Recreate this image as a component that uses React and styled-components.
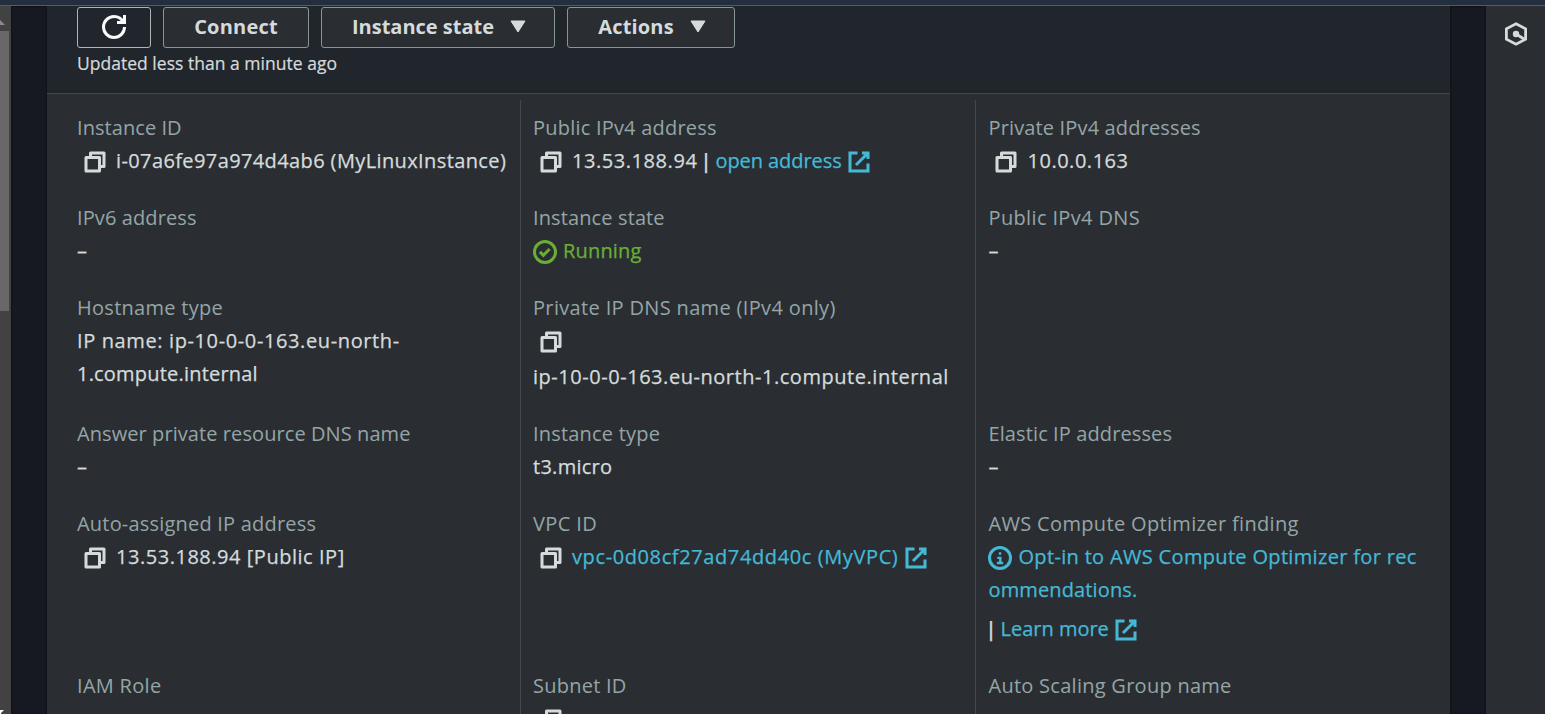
import React from "react";
import styled, { createGlobalStyle } from "styled-components";

const GlobalStyle = createGlobalStyle`
  *, *::before, *::after { box-sizing: border-box; }
  html, body { margin: 0; overflow: hidden; background: #161921; }
  body { font: 400 20px/33px "Open Sans", "Noto Sans", sans-serif; color: #d5dbdb; }
`;

const Page = styled.div`
  position: relative;
  display: flex;
  flex-direction: column;
  height: 100vh;
  overflow: hidden;
`;

const TopNav = styled.div`
  flex: none;
  height: 6px;
  background: #232f3e;
  border-bottom: 1px solid #545b64;
`;

const Main = styled.div`
  flex: 1;
  min-height: 0;
  display: flex;
`;

const ScrollTrack = styled.div`
  flex: none;
  width: 11px;
  background: #424242;
`;

const ScrollCap = styled.div`
  height: 25px;
  padding-top: 12px;
  line-height: 0;
`;

const ScrollThumb = styled.div`
  width: 9px;
  height: 280px;
  background: #686868;
`;

const Gutter = styled.div`
  flex: none;
  width: 36px;
  background: #161921;
  box-shadow: inset 1px 0 1px #111317, inset -1px 0 1px #111317, inset 0 1px 1px #111317;
`;

const Panel = styled.main`
  flex: 1;
  min-width: 0;
  display: flex;
  flex-direction: column;
  background: #2a2e33;
`;

const PanelHeader = styled.header`
  flex: none;
  height: 88px;
  padding: 1px 30px 0;
  background: #21252c;
  border-bottom: 1px solid #414750;
`;

const ButtonRow = styled.div`
  display: flex;
  gap: 12px;
`;

const Button = styled.button`
  display: flex;
  align-items: center;
  justify-content: center;
  gap: 16px;
  width: ${(p) => p.$width}px;
  height: 41px;
  padding: 0 0 2px ${(p) => (p.$menu ? 2 : 0)}px;
  border: 1px solid ${(p) => (p.$outlined ? "#aab7b8" : "#879596")};
  border-radius: 3px;
  background: ${(p) => (p.$outlined ? "transparent" : "#2a2e33")};
  color: #d5dbdb;
  font: 700 20px/30px "Open Sans", "Noto Sans", sans-serif;
  letter-spacing: ${(p) => p.$track || 0}px;
`;

const Updated = styled.div`
  font-size: 17.5px;
  line-height: 27px;
  padding-top: 2px;
  letter-spacing: 0.02px;
  -webkit-text-stroke: 0.2px;
`;

const Columns = styled.div`
  flex: 1;
  min-height: 0;
  display: grid;
  grid-template-columns: 473px 455px 475px;
  padding-top: 6px;
`;

const Column = styled.section`
  display: grid;
  grid-template-rows: 66px 66px 102px 66px 138px 66px;
  row-gap: 24px;
  align-content: start;
  padding: 11px 0 0 ${(p) => (p.$first ? 30 : p.$last ? 12.49 : 12)}px;
  border-left: ${(p) => (p.$first ? "none" : "1px solid #414750")};
  white-space: nowrap;
`;

const Field = styled.div`
  min-width: 0;
`;

const Label = styled.div`
  color: #95a5a6;
  letter-spacing: ${(p) => p.$track || 0}px;
`;

const Value = styled.div`
  height: ${(p) => p.$height || 33}px;
  margin-top: ${(p) => p.$gap || 0}px;
  -webkit-text-stroke: 0.25px;
`;

const Text = styled.span`
  color: ${(p) => ({ link: "#44b9d6", success: "#6aaf35" })[p.$tone] || "inherit"};
  letter-spacing: ${(p) => p.$track || 0}px;
`;

const Separator = styled.span`
  display: inline-block;
  width: 11px;
  margin: 0 4px 0 ${(p) => (p.$leading ? -3 : 3)}px;
  font-weight: 600;
`;

const Glyph = styled.svg`
  width: 24px;
  height: 24px;
  vertical-align: -6px;
  fill: none;
  stroke: currentColor;
  stroke-width: 2;
`;

const CopyGlyph = styled(Glyph)`
  margin: 0 9px 0 6px;
`;

const ExternalGlyph = styled(Glyph)`
  color: #44b9d6;
  margin-left: 5.5px;
`;

const StatusGlyph = styled(Glyph)`
  color: ${(p) => (p.$tone === "success" ? "#6aaf35" : "#44b9d6")};
  margin-right: 6px;
`;

const RefreshGlyph = styled(Glyph)`
  color: #fafafa;
`;

const CaretGlyph = styled.svg`
  width: 16px;
  height: 13px;
  fill: currentColor;
  stroke: currentColor;
  stroke-linejoin: round;
`;

const ToolsRail = styled.aside`
  flex: none;
  width: 59px;
  padding: 16px 0 0 18px;
  background: #2a2e33;
  line-height: 0;
`;

const Pointer = styled.svg`
  position: absolute;
  left: 0;
  bottom: 0;
  width: 5px;
  height: 4px;
`;

const Copy = () => (
  <CopyGlyph viewBox="0 0 16 16" strokeLinejoin="round">
    <path d="M2 5h9v9H2z" />
    <path d="M5 5V2h9v9h-3" />
  </CopyGlyph>
);

const External = () => (
  <ExternalGlyph viewBox="0 0 16 16">
    <path d="M10 2h4v4M6 10l8-8" />
    <path d="M14 9.05V14H2V2h5" />
  </ExternalGlyph>
);

const Success = () => (
  <StatusGlyph $tone="success" viewBox="0 0 16 16">
    <circle cx="8" cy="8" r="7" />
    <path d="m4.6 7.9 2.3 2.3 4.2-4.2" />
  </StatusGlyph>
);

const Info = () => (
  <StatusGlyph viewBox="0 0 16 16">
    <circle cx="8" cy="8" r="7" />
    <path d="M8 4.1v1.7M6.2 7.9H8.2v3.2M5.9 11.3h4.2" strokeWidth="1.6" />
  </StatusGlyph>
);

const Refresh = () => (
  <RefreshGlyph viewBox="0 0 16 16">
    <path d="M15 8c0 3.87-3.13 7-7 7s-7-3.13-7-7 3.13-7 7-7c2.79 0 5.2 1.63 6.33 4" />
    <path d="M10 5h5V0" />
  </RefreshGlyph>
);

const Caret = () => (
  <CaretGlyph viewBox="0 0 16 13">
    <path d="M1 1h14L8 12z" />
  </CaretGlyph>
);

const Hexagon = () => (
  <Glyph viewBox="0 0 24 24">
    <path d="M12 1.8l9.6 5v10.4l-9.6 5-9.6-5V6.8z" strokeWidth="2.8" />
    <circle cx="12" cy="12" r="3.2" fill="currentColor" stroke="none" />
    <path d="M12 12l8 5" strokeWidth="2.8" />
  </Glyph>
);

const Item = ({ label, track, children }) => (
  <Field>
    <Label $track={track}>{label}</Label>
    {children}
  </Field>
);

export default function App() {
  return (
    <Page>
      <GlobalStyle />
      <TopNav />
      <Main>
        <ScrollTrack>
          <ScrollCap>
            <svg width="5" height="5" viewBox="0 0 5 5">
              <path d="M0 0l5 5H0z" fill="#8a8a8a" />
            </svg>
          </ScrollCap>
          <ScrollThumb />
        </ScrollTrack>
        <Gutter />
        <Panel>
          <PanelHeader>
            <ButtonRow>
              <Button $width={74} $outlined aria-label="Refresh">
                <Refresh />
              </Button>
              <Button $width={146} $track={0.21}>Connect</Button>
              <Button $width={234} $menu>Instance state<Caret /></Button>
              <Button $width={168} $menu $track={0.18}>Actions<Caret /></Button>
            </ButtonRow>
            <Updated>Updated less than a minute ago</Updated>
          </PanelHeader>
          <Columns>
            <Column $first>
              <Item label="Instance ID" track={0.06}>
                <Value><Copy /><Text $track={0.39}>i-07a6fe97a974d4ab6 (MyLinuxInstance)</Text></Value>
              </Item>
              <Item label="IPv6 address" track={0.11}>
                <Value>–</Value>
              </Item>
              <Item label="Hostname type" track={0.28}>
                <Value><Text $track={0.62}>IP name: ip-10-0-0-163.eu-north-</Text></Value>
                <Value><Text $track={0.2}>1.compute.internal</Text></Value>
              </Item>
              <Item label="Answer private resource DNS name" track={0.08}>
                <Value>–</Value>
              </Item>
              <Item label="Auto-assigned IP address" track={0.2}>
                <Value><Copy /><Text $track={0.53}>13.53.188.94 [Public IP]</Text></Value>
              </Item>
              <Item label="IAM Role" track={0.3} />
            </Column>
            <Column>
              <Item label="Public IPv4 address" track={0.21}>
                <Value>
                  <Copy /><Text $track={0.56}>13.53.188.94</Text><Separator>|</Separator>
                  <Text $tone="link" $track={-0.06}>open address</Text><External />
                </Value>
              </Item>
              <Item label="Instance state" track={0.12}>
                <Value><Success /><Text $tone="success" $track={0.18}>Running</Text></Value>
              </Item>
              <Item label="Private IP DNS name (IPv4 only)" track={0.34}>
                <Value $height={36}><Copy /></Value>
                <Value><Text $track={0.54}>ip-10-0-0-163.eu-north-1.compute.internal</Text></Value>
              </Item>
              <Item label="Instance type" track={0.2}>
                <Value><Text $track={0.27}>t3.micro</Text></Value>
              </Item>
              <Item label="VPC ID" track={0.37}>
                <Value><Copy /><Text $tone="link" $track={0.61}>vpc-0d08cf27ad74dd40c (MyVPC)</Text><External /></Value>
              </Item>
              <Item label="Subnet ID" track={0.24}>
                <Value><Copy /></Value>
              </Item>
            </Column>
            <Column $last>
              <Item label="Private IPv4 addresses" track={0.15}>
                <Value><Copy /><Text $track={0.52}>10.0.0.163</Text></Value>
              </Item>
              <Item label="Public IPv4 DNS" track={0.36}>
                <Value>–</Value>
              </Item>
              <Field />
              <Item label="Elastic IP addresses" track={0.11}>
                <Value>–</Value>
              </Item>
              <Item label="AWS Compute Optimizer finding" track={0.34}>
                <Value><Info /><Text $tone="link" $track={0.33}>Opt-in to AWS Compute Optimizer for rec</Text></Value>
                <Value><Text $tone="link" $track={0.13}>ommendations.</Text></Value>
                <Value $gap={6}><Separator $leading>|</Separator><Text $tone="link">Learn more</Text><External /></Value>
              </Item>
              <Item label="Auto Scaling Group name" track={0.27} />
            </Column>
          </Columns>
        </Panel>
        <Gutter />
        <ToolsRail>
          <Hexagon />
        </ToolsRail>
      </Main>
      <Pointer viewBox="0 0 5 4">
        <path d="M0 0h4L1 3v1H0z" fill="#fff" />
      </Pointer>
    </Page>
  );
}
